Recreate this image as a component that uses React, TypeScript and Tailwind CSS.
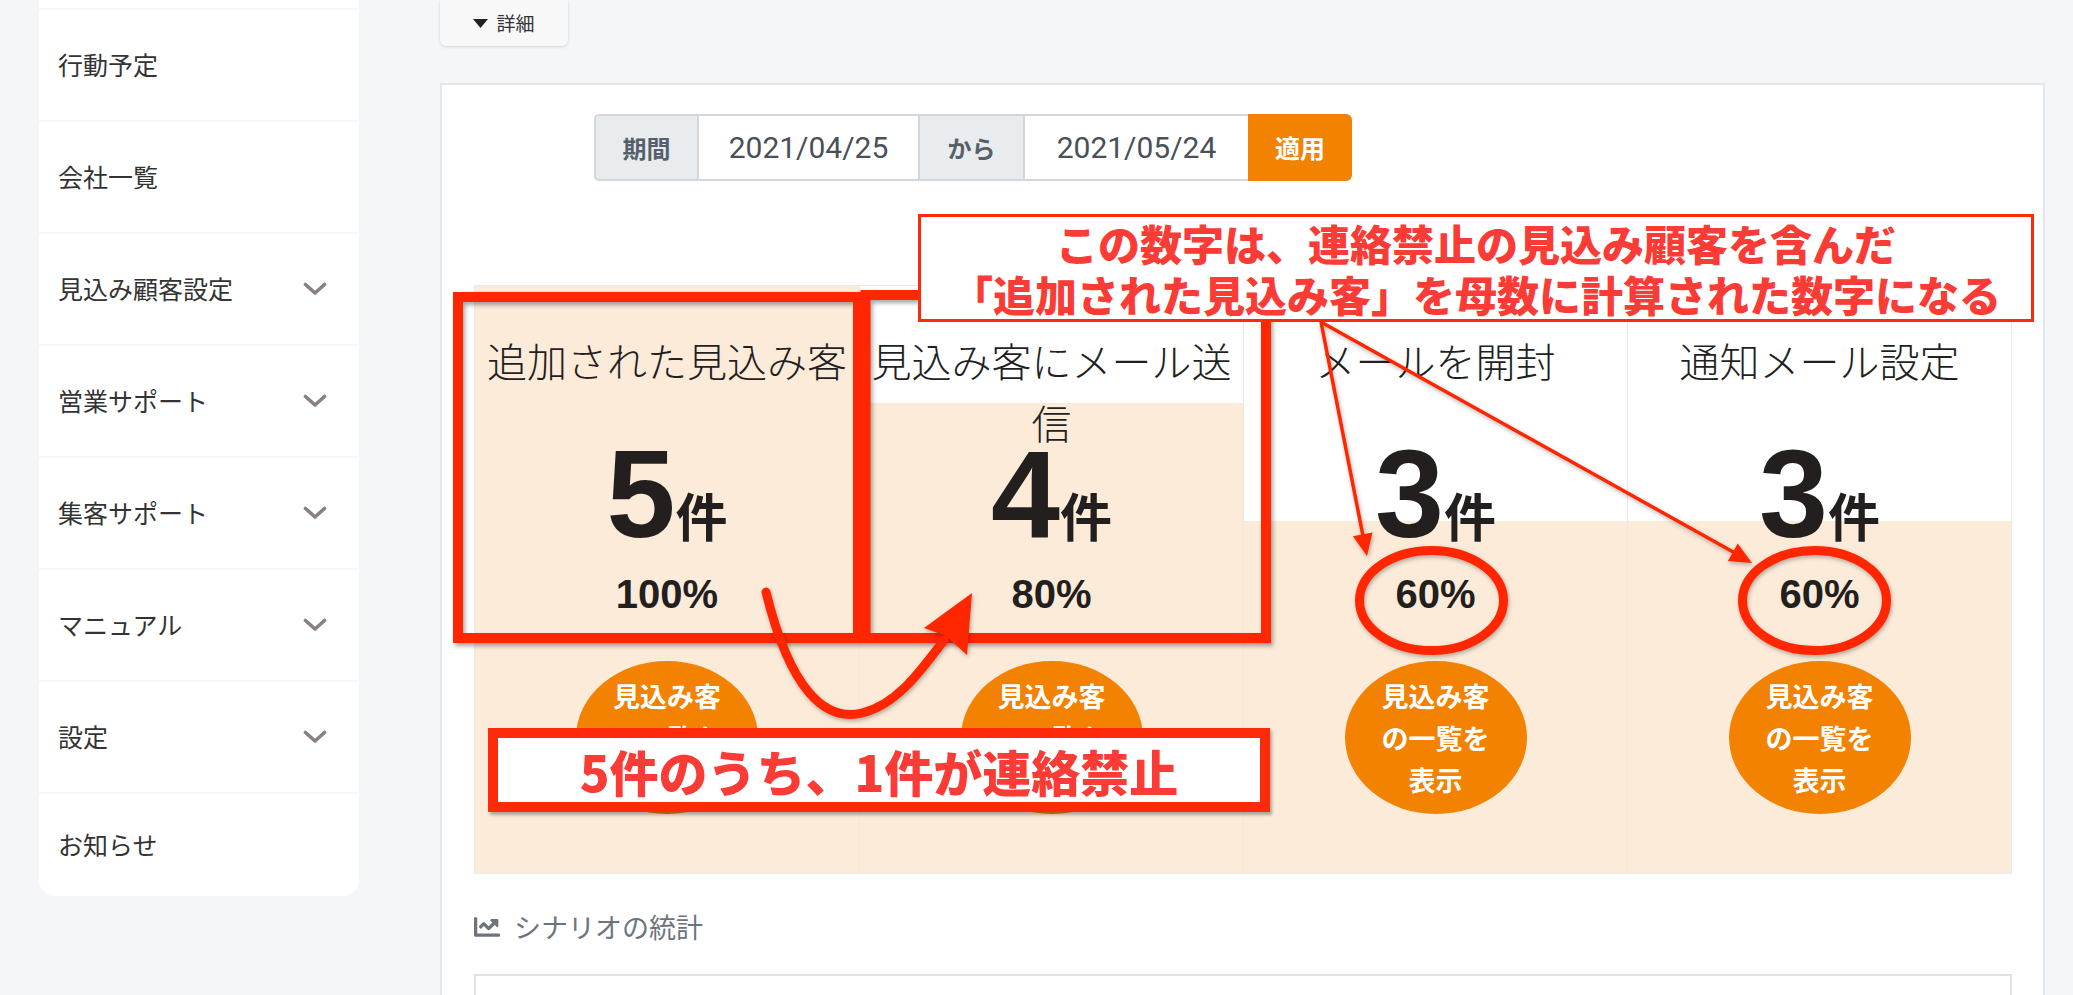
import { FaChartLine } from "react-icons/fa";

const menu = [
  { label: "行動予定", sub: false },
  { label: "会社一覧", sub: false },
  { label: "見込み顧客設定", sub: true },
  { label: "営業サポート", sub: true },
  { label: "集客サポート", sub: true },
  { label: "マニュアル", sub: true },
  { label: "設定", sub: true },
];

const total = 5;
const stats = [
  { title: "追加された見込み客", count: 5, rate: "100%" },
  { title: "見込み客にメール送信", count: 4, rate: "80%" },
  { title: "メールを開封", count: 3, rate: "60%" },
  { title: "通知メール設定", count: 3, rate: "60%" },
];

function Chevron() {
  return (
    <svg width="24" height="14" viewBox="0 0 24 14" fill="none">
      <path d="M2.5 2.5L12 11L21.5 2.5" stroke="#878183" strokeWidth="3.6" strokeLinecap="round" strokeLinejoin="round" />
    </svg>
  );
}

function Sidebar() {
  return (
    <div className="ml-[39px] w-[320px] shrink-0 self-start flex flex-col gap-[2px]">
      <div className="h-[8px] bg-white" />
      {menu.map((m) => (
        <div key={m.label} className="h-[110px] bg-white flex items-center justify-between pl-[19px] pr-[32px] text-[25px] text-[#333]">
          <span>{m.label}</span>
          {m.sub && <Chevron />}
        </div>
      ))}
      <div className="h-[102px] bg-white rounded-b-[16px] flex items-center pl-[19px] text-[25px] text-[#333]">お知らせ</div>
    </div>
  );
}

function DateFilter() {
  return (
    <div className="ml-[120px] shrink-0 flex h-[67px] w-[758px]">
      <div className="w-[105px] bg-[#e9ecef] border-2 border-[#d3d7dc] rounded-l-[5px] flex items-center justify-center text-[24px] font-bold text-[#56606b]">期間</div>
      <div className="w-[221px] border-y-2 border-r-2 border-[#d3d7dc] flex items-center justify-center font-['Roboto',sans-serif] text-[30px] text-[#495057]">2021/04/25</div>
      <div className="w-[105px] bg-[#e9ecef] border-y-2 border-r-2 border-[#d3d7dc] flex items-center justify-center text-[24px] font-bold text-[#56606b]">から</div>
      <div className="w-[223px] border-y-2 border-[#d3d7dc] flex items-center justify-center font-['Roboto',sans-serif] text-[30px] text-[#495057]">2021/05/24</div>
      <div className="w-[104px] bg-[#f38200] rounded-r-[6px] flex items-center justify-center text-[25px] font-bold text-white">適用</div>
    </div>
  );
}

function StatsGrid() {
  return (
    <div className="mt-[104px] grid grid-cols-4 h-[589px] shrink-0 border border-[#ebebeb]">
      {stats.map((s, i) => (
        <div key={s.title} className={i > 0 ? "relative border-l border-[#f0e7df]" : "relative"}>
          <div className="absolute inset-x-0 bottom-0 bg-[#fdebda]" style={{ height: `${(s.count / total) * 100}%` }} />
          <div className="relative flex flex-col items-center pt-[43px] text-[#231f1f]">
            <div className="h-[103px] w-full text-center text-[40px] font-light leading-[62px]">{s.title}</div>
            <div className="h-[124px] flex items-baseline justify-center">
              <span className="font-['Liberation_Sans',sans-serif] font-bold text-[124px] leading-none">{s.count}</span>
              <span className="font-bold text-[52px] leading-none">件</span>
            </div>
            <div className="mt-[18px] h-[40px] font-['Liberation_Sans',sans-serif] font-bold text-[40px] leading-none">{s.rate}</div>
            <div className="mt-[47px] w-[182px] h-[153px] rounded-[50%] bg-[#f38200] flex items-center justify-center text-center text-white font-bold text-[27px] leading-[42px]">
              見込み客<br />の一覧を<br />表示
            </div>
          </div>
        </div>
      ))}
    </div>
  );
}

export default function App() {
  return (
    <div className="relative w-[2073px] h-[995px] overflow-hidden flex bg-[#f5f6f8] font-['Noto_Sans_CJK_JP',sans-serif]">
      <Sidebar />

      <div className="ml-[81px] w-[1605px] flex flex-col">
        <div className="shrink-0 w-[128px] h-[46px] bg-[#f8f8f8] rounded-b-[6px] shadow-[0_1px_3px_rgba(0,0,0,0.14)] flex items-center justify-center gap-[8px] text-[19px] text-[#333]">
          <svg width="15" height="9" viewBox="0 0 15 9">
            <path d="M0 0H15L7.5 9Z" fill="#222" />
          </svg>
          <span>詳細</span>
        </div>

        <div className="mt-[37px] flex-1 min-h-0 overflow-hidden flex flex-col bg-white border-2 border-b-0 border-[#e4e7eb] pl-[32px] pr-[31px] pt-[29px]">
          <DateFilter />
          <StatsGrid />
          <div className="mt-[33px] h-[40px] shrink-0 flex items-center gap-[14px] text-[27px] text-[#6c757d]">
            <FaChartLine className="w-[26px] h-[26px]" />
            <span>シナリオの統計</span>
          </div>
          <div className="mt-[27px] h-[40px] shrink-0 border-2 border-b-0 border-[#dee2e6]" />
        </div>
      </div>

      {/* annotations */}
      <svg className="absolute left-0 top-0 pointer-events-none drop-shadow-[2px_3px_2px_rgba(0,0,0,0.35)]" width="2073" height="995">
        <rect x="458" y="297" width="400" height="341" fill="none" stroke="#ff2600" strokeWidth="10" />
        <rect x="865.5" y="295" width="400.5" height="343" fill="none" stroke="#ff2600" strokeWidth="10" />
      </svg>

      <div className="absolute left-[918px] top-[214px] w-[1116px] h-[108px] border-[3px] border-[#ff2a0a] bg-white flex flex-col items-center justify-center text-[42px] font-black leading-[51px] text-[#fb3b35]">
        <div>この数字は、連絡禁止の見込み顧客を含んだ</div>
        <div>「追加された見込み客」を母数に計算された数字になる</div>
      </div>

      <svg className="absolute left-0 top-0 pointer-events-none drop-shadow-[1px_2px_2px_rgba(0,0,0,0.3)]" width="2073" height="995">
        <line x1="1321" y1="322" x2="1363" y2="536" stroke="#ff2600" strokeWidth="3.5" />
        <polygon points="1367,556 1372.5,532.5 1352.9,536.3" fill="#ff2600" />
        <line x1="1321" y1="322" x2="1735" y2="553" stroke="#ff2600" strokeWidth="3.5" />
        <polygon points="1752,563 1727.9,561 1737.7,543.6" fill="#ff2600" />
        <ellipse cx="1431.5" cy="600.5" rx="72" ry="50" fill="none" stroke="#ff2600" strokeWidth="9" />
        <ellipse cx="1814.5" cy="600.5" rx="72" ry="50" fill="none" stroke="#ff2600" strokeWidth="9" />
        <path d="M766 592 C790 690 825 722 862 713 C895 705 918 675 944 640" fill="none" stroke="#ff2600" strokeWidth="9" strokeLinecap="round" />
        <polygon points="972,593 924,628 946,636 967,655" fill="#ff2600" />
      </svg>

      <div className="absolute left-[488px] top-[728px] w-[782px] h-[84px] border-[10px] border-[#ff2a0a] bg-white flex items-center justify-center text-[49px] font-black leading-none text-[#fb3b35] shadow-[2px_3px_3px_rgba(0,0,0,0.3)]">
        5件のうち、1件が連絡禁止
      </div>
    </div>
  );
}
